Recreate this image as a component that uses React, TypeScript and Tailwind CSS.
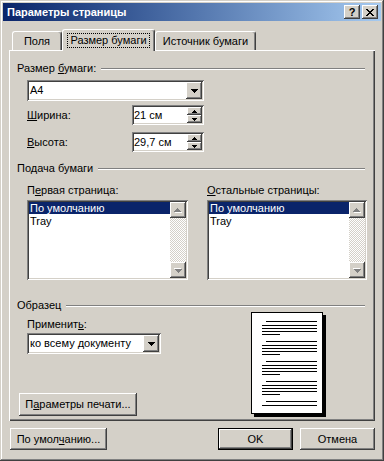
import React from 'react';

const raised =
  'shadow-[inset_-1px_-1px_0_#404040,inset_1px_1px_0_#ffffff,inset_-2px_-2px_0_#808080,inset_2px_2px_0_#d4d0c8]';
const sunken =
  'shadow-[inset_1px_1px_0_#808080,inset_-1px_-1px_0_#ffffff,inset_2px_2px_0_#404040,inset_-2px_-2px_0_#d4d0c8]';

const U = ({ children }: { children: React.ReactNode }) => (
  <span className="underline underline-offset-[1px]">{children}</span>
);

const DownArrow = () => (
  <svg width="7" height="4" shapeRendering="crispEdges">
    <rect x="0" y="0" width="7" height="1" fill="#000" />
    <rect x="1" y="1" width="5" height="1" fill="#000" />
    <rect x="2" y="2" width="3" height="1" fill="#000" />
    <rect x="3" y="3" width="1" height="1" fill="#000" />
  </svg>
);

const SpinArrow = ({ up }: { up?: boolean }) => (
  <svg width="5" height="3" shapeRendering="crispEdges" className={up ? '' : 'rotate-180'}>
    <rect x="2" y="0" width="1" height="1" fill="#000" />
    <rect x="1" y="1" width="3" height="1" fill="#000" />
    <rect x="0" y="2" width="5" height="1" fill="#000" />
  </svg>
);

const GrayArrow = ({ up }: { up?: boolean }) => (
  <svg width="8" height="5" shapeRendering="crispEdges" className={up ? '' : 'rotate-180'}>
    <g fill="#ffffff" transform="translate(1 1)">
      <rect x="3" y="0" width="1" height="1" />
      <rect x="2" y="1" width="3" height="1" />
      <rect x="1" y="2" width="5" height="1" />
      <rect x="0" y="3" width="7" height="1" />
    </g>
    <g fill="#808080">
      <rect x="3" y="0" width="1" height="1" />
      <rect x="2" y="1" width="3" height="1" />
      <rect x="1" y="2" width="5" height="1" />
      <rect x="0" y="3" width="7" height="1" />
    </g>
  </svg>
);

const CloseGlyph = () => (
  <svg width="8" height="7" shapeRendering="crispEdges">
    <g fill="#000">
      <rect x="0" y="0" width="2" height="1" />
      <rect x="6" y="0" width="2" height="1" />
      <rect x="1" y="1" width="2" height="1" />
      <rect x="5" y="1" width="2" height="1" />
      <rect x="2" y="2" width="4" height="1" />
      <rect x="3" y="3" width="2" height="1" />
      <rect x="2" y="4" width="4" height="1" />
      <rect x="1" y="5" width="2" height="1" />
      <rect x="5" y="5" width="2" height="1" />
      <rect x="0" y="6" width="2" height="1" />
      <rect x="6" y="6" width="2" height="1" />
    </g>
  </svg>
);

const GroupHeader = ({ children }: { children: React.ReactNode }) => (
  <div className="flex h-[13px] items-center">
    <span className="leading-[13px]">{children}</span>
    <div className="ml-[5px] h-[2px] flex-1 border-t border-b border-t-[#808080] border-b-white" />
  </div>
);

const Combo = ({ value, className }: { value: string; className: string }) => (
  <div className={`flex h-[21px] items-center bg-white p-[2px] ${sunken} ${className}`}>
    <span className="flex-1 pl-[1px] leading-[13px]">{value}</span>
    <div className={`flex h-[17px] w-[16px] items-center justify-center bg-[#d4d0c8] ${raised}`}>
      <DownArrow />
    </div>
  </div>
);

const Spinner = ({ value }: { value: string }) => (
  <div className={`flex h-[20px] w-[72px] items-center bg-white p-[2px] ${sunken}`}>
    <span className="flex-1 leading-[13px]">{value}</span>
    <div className="flex flex-col">
      <div className={`flex h-[8px] w-[15px] items-center justify-center bg-[#d4d0c8] ${raised}`}>
        <SpinArrow up />
      </div>
      <div className={`flex h-[8px] w-[15px] items-center justify-center bg-[#d4d0c8] ${raised}`}>
        <SpinArrow />
      </div>
    </div>
  </div>
);

const ListBox = ({ className }: { className: string }) => (
  <div className={`mt-[3px] flex h-[80px] bg-white p-[2px] ${sunken} ${className}`}>
    <div className="min-w-0 flex-1">
      <div className="h-[12px] bg-[#0a246a] pl-[1px] leading-[12px] text-white">По умолчанию</div>
      <div className="h-[13px] pl-[1px] leading-[14px]">Tray</div>
    </div>
    <div className="flex w-[16px] flex-col">
      <div className={`flex h-[16px] items-center justify-center bg-[#d4d0c8] ${raised}`}>
        <GrayArrow up />
      </div>
      <div className="flex-1 bg-[image:repeating-conic-gradient(#ffffff_0%_25%,#d4d0c8_0%_50%)] bg-[length:2px_2px]" />
      <div className={`flex h-[16px] items-center justify-center bg-[#d4d0c8] ${raised}`}>
        <GrayArrow />
      </div>
    </div>
  </div>
);

const PagePreview = () => {
  const lines: React.ReactNode[] = [];
  [9, 29, 49, 69].forEach((top, i) => {
    lines.push(<rect key={`a${i}`} x="15" y={top} width="51" height="1" />);
    lines.push(<rect key={`b${i}`} x="11" y={top + 4} width="55" height="1" />);
    lines.push(<rect key={`c${i}`} x="11" y={top + 7} width="55" height="1" />);
    lines.push(<rect key={`d${i}`} x="11" y={top + 10} width="55" height="1" />);
    lines.push(<rect key={`e${i}`} x="11" y={top + 13} width="18" height="1" />);
  });
  lines.push(<rect key="f1" x="15" y="89" width="51" height="1" />);
  lines.push(<rect key="f2" x="11" y="93" width="55" height="1" />);
  return (
    <div className="h-[102px] w-[72px] border border-black bg-white shadow-[3px_3px_0_#000]">
      <svg width="70" height="100" shapeRendering="crispEdges" className="-ml-px -mt-px">
        <g fill="#000">{lines}</g>
      </svg>
    </div>
  );
};

const Tab = ({ label, w }: { label: string; w: string }) => (
  <div
    className={`flex h-[19px] items-center justify-center rounded-t-[3px] border-l border-t border-r border-white border-r-[#404040] bg-[#d4d0c8] shadow-[inset_-1px_0_0_#808080] ${w}`}
  >
    {label}
  </div>
);

export default function App() {
  return (
    <div
      className={`h-[461px] w-[384px] bg-[#d4d0c8] p-[3px] font-['Liberation_Sans',Arial,sans-serif] text-[11px] text-black shadow-[inset_-1px_-1px_0_#404040,inset_1px_1px_0_#d4d0c8,inset_-2px_-2px_0_#808080,inset_2px_2px_0_#ffffff]`}
    >
      {/* title bar */}
      <div className="flex h-[18px] items-center bg-linear-to-r from-[#0a246a] to-[#a6caf0] pl-[4px] pr-[3px]">
        <span className="flex-1 text-[11px] font-bold text-white">Параметры страницы</span>
        <div className={`flex h-[14px] w-[16px] items-center justify-center bg-[#d4d0c8] text-[11px] font-bold leading-none ${raised}`}>
          ?
        </div>
        <div className={`ml-[2px] flex h-[14px] w-[16px] items-center justify-center bg-[#d4d0c8] ${raised}`}>
          <CloseGlyph />
        </div>
      </div>

      {/* tabs */}
      <div className="mt-[8px] flex h-[21px] items-end pl-[9px]">
        <Tab label="Поля" w="w-[50px]" />
        <div className="relative z-10 -mb-px flex h-[22px] w-[93px] items-start justify-center rounded-t-[3px] border-l border-t border-r border-white border-r-[#404040] bg-[#d4d0c8] pt-[3px] shadow-[inset_-1px_0_0_#808080]">
          <span className="border border-dotted border-black px-[2px] leading-[13px]">Размер бумаги</span>
        </div>
        <Tab label="Источник бумаги" w="w-[101px]" />
      </div>

      {/* panel */}
      <div className="ml-[6px] h-[371px] w-[366px] pt-[12px] pl-[8px] pr-[10px] shadow-[inset_1px_1px_0_#ffffff,inset_-1px_-1px_0_#404040,inset_-2px_-2px_0_#808080]">
        <GroupHeader>
          Размер <U>б</U>умаги:
        </GroupHeader>
        <Combo value="A4" className="mt-[5px] ml-[10px] w-[177px]" />
        <div className="mt-[4px] ml-[10px] flex h-[20px] items-center">
          <span className="w-[105px]">
            <U>Ш</U>ирина:
          </span>
          <Spinner value="21 см" />
        </div>
        <div className="mt-[7px] ml-[10px] flex h-[20px] items-center">
          <span className="w-[105px]">
            <U>В</U>ысота:
          </span>
          <Spinner value="29,7 см" />
        </div>

        <div className="mt-[10px]">
          <GroupHeader>Подача бумаги</GroupHeader>
        </div>
        <div className="mt-[9px] flex">
          <div className="ml-[10px] w-[161px]">
            <div className="h-[13px] leading-[13px]">
              П<U>е</U>рвая страница:
            </div>
            <ListBox className="w-[161px]" />
          </div>
          <div className="ml-[19px] w-[160px]">
            <div className="h-[13px] leading-[13px]">
              <U>О</U>стальные страницы:
            </div>
            <ListBox className="w-[160px]" />
          </div>
        </div>

        <div className="mt-[19px]">
          <GroupHeader>Образец</GroupHeader>
        </div>
        <div className="flex">
          <div className="w-[234px]">
            <div className="mt-[6px] ml-[10px] h-[13px] leading-[13px]">
              Применит<U>ь</U>:
            </div>
            <Combo value="ко всему документу" className="mt-[2px] ml-[10px] w-[134px]" />
            <div className={`mt-[39px] ml-[2px] flex h-[23px] w-[118px] items-center justify-center bg-[#d4d0c8] ${raised}`}>
              <span>
                П<U>а</U>раметры печати...
              </span>
            </div>
          </div>
          <PagePreview />
        </div>
      </div>

      {/* bottom buttons */}
      <div className="mt-[7px] flex h-[22px] pl-[7px] pr-[6px]">
        <div className={`flex w-[97px] items-center justify-center bg-[#d4d0c8] ${raised}`}>
          <span>
            По умол<U>ч</U>анию...
          </span>
        </div>
        <div className="flex-1" />
        <div className="flex w-[75px] items-center justify-center border border-black bg-[#d4d0c8] shadow-[inset_-1px_-1px_0_#404040,inset_1px_1px_0_#ffffff,inset_-2px_-2px_0_#808080]">
          OK
        </div>
        <div className={`ml-[7px] flex w-[75px] items-center justify-center bg-[#d4d0c8] ${raised}`}>
          Отмена
        </div>
      </div>
    </div>
  );
}
